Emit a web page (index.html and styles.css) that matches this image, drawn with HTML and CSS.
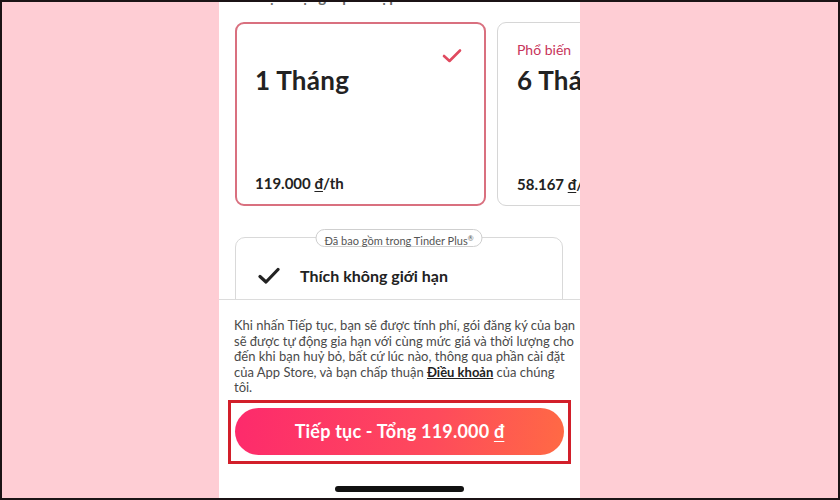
FILE: index.html
```html
<!DOCTYPE html>
<html lang="vi">
<head>
<meta charset="utf-8">
<link rel="stylesheet" href="styles.css">
</head>
<body>
<div class="frame">
  <div class="phone">
    <div class="scroll">
      <div class="cut"><span>Chọn một gói phù hợp</span></div>
      <div class="cards">
        <div class="card selected">
          <svg class="tick" width="20" height="16" viewBox="0 0 20 16"><path d="M2 8 L7.5 13 L18 2.5" fill="none" stroke="#e04a5f" stroke-width="2.6" stroke-linecap="round" stroke-linejoin="round"/></svg>
          <div class="tag"></div>
          <div class="dur">1 Tháng</div>
          <div class="price">119.000 <u>đ</u>/th</div>
        </div>
        <div class="card">
          <div class="tag">Phổ biến</div>
          <div class="dur">6 Tháng</div>
          <div class="price">58.167 <u>đ</u>/th</div>
        </div>
      </div>
      <div class="included">
        <div class="pill">Đã bao gồm trong Tinder Plus<sup>®</sup></div>
        <div class="feature">
          <svg width="22" height="18" viewBox="0 0 22 18"><path d="M2 9.5 L8 15 L20 2.5" fill="none" stroke="#222" stroke-width="3.2" stroke-linecap="round" stroke-linejoin="round"/></svg>
          <span>Thích không giới hạn</span>
        </div>
      </div>
    </div>
    <div class="panel">
      <p class="terms">Khi nhấn Tiếp tục, bạn sẽ được tính phí, gói đăng ký của bạn<br>sẽ được tự động gia hạn với cùng mức giá và thời lượng cho<br>đến khi bạn huỷ bỏ, bất cứ lúc nào, thông qua phần cài đặt<br>của App Store, và bạn chấp thuận <a>Điều khoản</a> của chúng<br>tôi.</p>
      <div class="highlight">
        <div class="cta"><span>Tiếp tục - Tổng 119.000&nbsp;<u>đ</u></span></div>
      </div>
      <div class="home"></div>
    </div>
  </div>
</div>
</body>
</html>
```
FILE: styles.css
```css
* { box-sizing: border-box; }
html, body { margin: 0; padding: 0; }
body {
  width: 840px;
  height: 500px;
  background: #1b1315;
  font-family: Lato, "Open Sans", sans-serif;
  overflow: hidden;
}
.frame {
  margin: 2px;
  width: 836px;
  height: 496px;
  background: #fecdd4;
  padding-left: 217px;
  display: flex;
}
.phone {
  width: 361px;
  height: 496px;
  background: #fff;
  display: flex;
  flex-direction: column;
  overflow: hidden;
}
.scroll {
  height: 297px;
  overflow: hidden;
  padding-left: 16px;
}
.cut {
  height: 5px;
  overflow: hidden;
  padding-left: 14px;
}
.cut span {
  display: block;
  margin-top: -15px;
  font-size: 15px;
  line-height: 18px;
  color: #666;
  font-weight: 700;
}
.cards {
  display: flex;
  gap: 11px;
  margin-top: 15px;
  width: 600px;
}
.card {
  width: 251px;
  height: 184px;
  border: 1px solid #d6d6d6;
  border-radius: 9px;
  padding: 18px 0 0 19px;
  display: flex;
  flex-direction: column;
  position: relative;
  flex: none;
}
.card.selected {
  border: 2px solid #d9707f;
  padding: 17px 0 0 18px;
}
.tick {
  position: absolute;
  right: 22px;
  top: 24px;
}
.tag {
  height: 18px;
  font-size: 14px;
  color: #c8345a;
  line-height: 18px;
}
.dur {
  font-size: 26px;
  font-weight: 700;
  color: #222;
  margin-top: 5px;
  line-height: 32px;
  letter-spacing: 0.3px;
}
.price {
  margin-top: auto;
  margin-bottom: 12px;
  font-size: 15px;
  font-weight: 700;
  color: #222;
}
.price u { text-decoration-thickness: 1px; text-underline-offset: 2px; }
.included {
  margin-top: 31px;
  width: 328px;
  height: 90px;
  border: 1px solid #d9d9d9;
  border-radius: 10px;
  position: relative;
  padding: 28px 0 0 22px;
}
.pill {
  position: absolute;
  top: -9px;
  left: 50%;
  transform: translateX(-50%);
  background: #fff;
  border: 1px solid #cfcfcf;
  border-radius: 10px;
  font-size: 11px;
  color: #555;
  height: 18px;
  line-height: 16px;
  padding: 0 8px;
  white-space: nowrap;
}
.pill sup { font-size: 7px; vertical-align: 4px; }
.feature {
  display: flex;
  align-items: center;
  gap: 20px;
  font-size: 16px;
  font-weight: 700;
  color: #222;
}
.panel {
  flex: 1;
  border-top: 1px solid #dcdcdc;
  background: #fff;
  display: flex;
  flex-direction: column;
}
.terms {
  margin: 18px 0 0 15px;
  font-size: 13px;
  line-height: 15.6px;
  color: #4a4a4a;
  white-space: nowrap;
}
.terms a {
  color: #222;
  font-weight: 700;
  text-decoration: underline;
}
.highlight {
  margin: 4px 0 0 9px;
  width: 343px;
  height: 64px;
  border: 3px solid #d21f2a;
  padding: 5px 0 0 4px;
}
.cta {
  width: 329px;
  height: 47px;
  border-radius: 24px;
  background: linear-gradient(100deg, #fd2a6c 0%, #fe4a5c 60%, #ff6a44 100%);
  color: #fff;
  font-size: 18px;
  font-weight: 700;
  display: flex;
  align-items: center;
  justify-content: center;
  letter-spacing: 0.2px;
}
.cta u { text-decoration-thickness: 1px; text-underline-offset: 3px; }
.home {
  margin: 22px 0 0 116px;
  width: 129px;
  height: 6px;
  border-radius: 3px;
  background: #111;
}
```
